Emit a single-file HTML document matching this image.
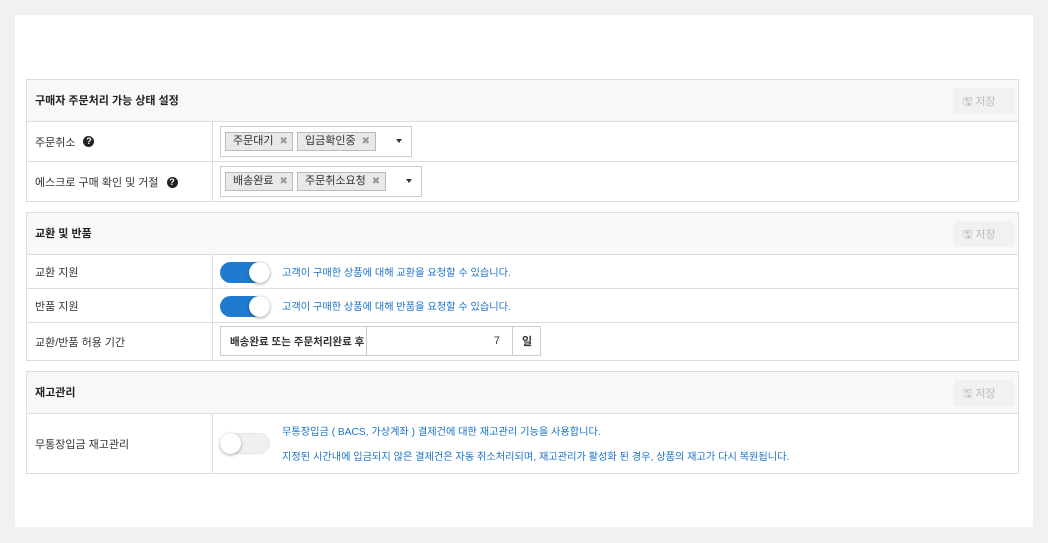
<!DOCTYPE html>
<html><head><meta charset="utf-8"><style>
*{box-sizing:border-box;margin:0;padding:0}
body{width:1048px;height:543px;background:#f1f1f1;font-family:"Liberation Sans","Noto Sans CJK KR",sans-serif;font-size:11px;color:#333;position:relative;overflow:hidden}
.panel{position:absolute;left:15px;top:15px;width:1018px;height:512px;background:#fff}
.sec{position:absolute;left:26px;width:993px;border:1px solid #ddd;background:#fff}
.hd{position:absolute;left:0;top:0;right:0;height:42px;background:#f8f8f8;border-bottom:1px solid #ddd;font-weight:bold;font-size:11px;color:#222;padding:12px 0 0 8px}
.save{position:absolute;right:4px;top:8px;width:60px;height:26px;background:#f1f1f1;color:#bbb;font-size:11px;padding:5px 0 0 9px;font-weight:normal}
.row{position:absolute;left:0;right:0;border-bottom:1px solid #ddd}
.row:last-child{border-bottom:none}
.lab{position:absolute;left:0;top:0;bottom:0;width:186px;border-right:1px solid #ddd;padding-left:8px;display:flex;align-items:center;color:#333}
.q{display:inline-block;width:11px;height:11px;border-radius:50%;background:#222;color:#fff;font-size:9px;font-weight:bold;text-align:center;line-height:11px;margin-left:8px}
.sel{position:absolute;top:4px;height:31px;border:1px solid #ccc;background:#fff}
.tag{position:absolute;top:5px;height:19px;background:#e8e8e8;border:1px solid #bbb;padding:0 0 0 7px;line-height:17px;color:#333}
.tag i{font-style:normal;color:#999;font-size:10px;margin-left:6px}
.car{position:absolute;top:12px;width:0;height:0;border-left:3px solid transparent;border-right:3px solid transparent;border-top:4px solid #333}
.tg{position:absolute;left:193px;width:50px;height:21px;border-radius:11px}
.tg b{position:absolute;top:0;width:21px;height:21px;border-radius:50%;background:#fff;box-shadow:0 1px 3px rgba(0,0,0,.35)}
.blue{color:#1a73c8;position:absolute;font-size:10.2px;white-space:nowrap}
.cell{position:absolute;top:3px;height:30px;border:1px solid #ccc;display:flex;align-items:center}
</style></head><body>
<div class="panel"></div>

<div class="sec" style="top:79px;height:123px">
 <div class="hd">구매자 주문처리 가능 상태 설정<div class="save">&#128427; 저장</div></div>
 <div class="row" style="top:42px;height:40px"><div class="lab">주문취소<span class="q">?</span></div>
  <div class="sel" style="left:193px;width:192px">
   <div class="tag" style="left:4px;width:68px">주문대기<i>✖</i></div>
   <div class="tag" style="left:76px;width:79px">입금확인중<i>✖</i></div>
   <div class="car" style="left:175px"></div>
  </div></div>
 <div class="row" style="top:82px;height:40px"><div class="lab">에스크로 구매 확인 및 거절<span class="q">?</span></div>
  <div class="sel" style="left:193px;width:202px">
   <div class="tag" style="left:4px;width:68px">배송완료<i>✖</i></div>
   <div class="tag" style="left:76px;width:89px">주문취소요청<i>✖</i></div>
   <div class="car" style="left:185px"></div>
  </div></div>
</div>

<div class="sec" style="top:212px;height:149px">
 <div class="hd">교환 및 반품<div class="save">&#128427; 저장</div></div>
 <div class="row" style="top:42px;height:34px"><div class="lab">교환 지원</div>
  <div class="tg" style="top:7px;background:#1f7bd0"><b style="left:29px"></b></div>
  <div class="blue" style="left:255px;top:9px">고객이 구매한 상품에 대해 교환을 요청할 수 있습니다.</div></div>
 <div class="row" style="top:76px;height:34px"><div class="lab">반품 지원</div>
  <div class="tg" style="top:7px;background:#1f7bd0"><b style="left:29px"></b></div>
  <div class="blue" style="left:255px;top:9px">고객이 구매한 상품에 대해 반품을 요청할 수 있습니다.</div></div>
 <div class="row" style="top:110px;height:38px"><div class="lab">교환/반품 허용 기간</div>
  <div class="cell" style="left:193px;width:147px;font-weight:bold;padding-left:9px;font-size:10.5px">배송완료 또는 주문처리완료 후</div>
  <div class="cell" style="left:339px;width:147px;justify-content:flex-end;padding-right:12px">7</div>
  <div class="cell" style="left:485px;width:29px;font-weight:bold;padding-left:9px">일</div>
 </div>
</div>

<div class="sec" style="top:371px;height:103px">
 <div class="hd">재고관리<div class="save">&#128427; 저장</div></div>
 <div class="row" style="top:42px;height:60px"><div class="lab">무통장입금 재고관리</div>
  <div class="tg" style="top:19px;background:#f0f0f0;border:1px solid #e4e4e4"><b style="left:-1px;top:-1px"></b></div>
  <div class="blue" style="left:255px;top:9px">무통장입금 ( BACS, 가상계좌 ) 결제건에 대한 재고관리 기능을 사용합니다.</div>
  <div class="blue" style="left:255px;top:34px">지정된 시간내에 입금되지 않은 결제건은 자동 취소처리되며, 재고관리가 활성화 된 경우, 상품의 재고가 다시 복원됩니다.</div>
 </div>
</div>
</body></html>
